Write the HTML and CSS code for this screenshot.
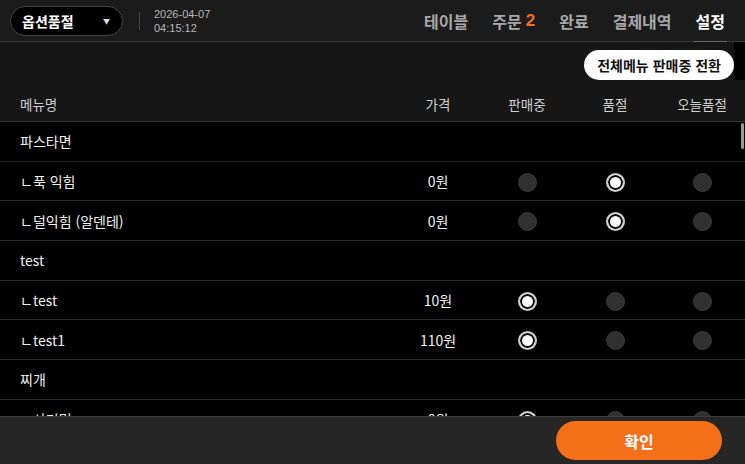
FILE: index.html
```html
<!DOCTYPE html>
<html lang="ko">
<head>
  <meta charset="UTF-8">
  <meta name="viewport" content="width=device-width, initial-scale=1.0">
  <title>옵션품절</title>
  <link rel="stylesheet" href="styles.css">
</head>
<body>
  <div class="app">
    <!-- 상단 바 -->
    <header class="topbar">
      <div class="select-pill">
        <span>옵션품절</span>
        <span class="caret">▼</span>
      </div>
      <div class="divider"></div>
      <div class="clock">
        <div>2026-04-07</div>
        <div>04:15:12</div>
      </div>
      <nav class="nav">
        <a>테이블</a>
        <a>주문 <b class="count">2</b></a>
        <a>완료</a>
        <a>결제내역</a>
        <a class="active">설정</a>
      </nav>
    </header>

    <!-- 툴바 + 표 머리 -->
    <section class="toolbar">
      <div class="toolbar-actions">
        <button class="all-btn">전체메뉴 판매중 전환</button>
        <div class="track-top"></div>
      </div>
      <div class="grid head">
        <div class="cell-name">메뉴명</div>
        <div>가격</div>
        <div>판매중</div>
        <div>품절</div>
        <div>오늘품절</div>
      </div>
    </section>

    <!-- 메뉴 목록 -->
    <section class="list">
      <div class="thumb"></div>
      <div class="row group"><div class="cell-name">파스타면</div></div>
      <div class="row grid">
        <div class="cell-name">ㄴ푹 익힘</div><div>0원</div>
        <div><span class="radio"></span></div><div><span class="radio on"></span></div><div><span class="radio"></span></div>
      </div>
      <div class="row grid">
        <div class="cell-name">ㄴ덜익힘 (알덴테)</div><div>0원</div>
        <div><span class="radio"></span></div><div><span class="radio on"></span></div><div><span class="radio"></span></div>
      </div>
      <div class="row group"><div class="cell-name">test</div></div>
      <div class="row grid">
        <div class="cell-name">ㄴtest</div><div>10원</div>
        <div><span class="radio on"></span></div><div><span class="radio"></span></div><div><span class="radio"></span></div>
      </div>
      <div class="row grid">
        <div class="cell-name">ㄴtest1</div><div>110원</div>
        <div><span class="radio on"></span></div><div><span class="radio"></span></div><div><span class="radio"></span></div>
      </div>
      <div class="row group"><div class="cell-name">찌개</div></div>
      <div class="row grid">
        <div class="cell-name">ㄴ사리면</div><div>0원</div>
        <div><span class="radio on"></span></div><div><span class="radio"></span></div><div><span class="radio"></span></div>
      </div>
    </section>

    <!-- 하단 -->
    <footer class="footer">
      <button class="ok-btn">확인</button>
    </footer>
  </div>
</body>
</html>
```

FILE: styles.css
```css
* {
  margin: 0;
  padding: 0;
  box-sizing: border-box;
}
html, body {
  height: 100%;
  background: #000;
  font-family: "Noto Sans CJK KR", "Noto Sans", sans-serif;
  color: #fff;
  overflow: hidden;
}
.app {
  height: 464px;
  display: flex;
  flex-direction: column;
  background: #000;
}

/* 상단 바 */
.topbar {
  height: 42px;
  flex: none;
  display: flex;
  align-items: center;
  padding: 0 10px;
  background: #1b1b1b;
  border-bottom: 1px solid #3a3a3a;
}
.select-pill {
  width: 113px;
  height: 30px;
  display: flex;
  align-items: center;
  justify-content: space-between;
  padding: 0 12px 0 11px;
  background: #000;
  border: 1px solid #444;
  border-radius: 15px;
  font-size: 14px;
  font-weight: 700;
}
.caret {
  font-size: 7px;
  color: #ddd;
}
.divider {
  width: 1px;
  height: 18px;
  background: #444;
  margin: 0 14px 0 16px;
}
.clock {
  font-family: "Liberation Sans", Arial, sans-serif;
  font-size: 11px;
  line-height: 14px;
  color: #b8b8b8;
}
.nav {
  margin-left: auto;
  display: flex;
  align-items: center;
  gap: 24px;
  height: 100%;
  padding-right: 10px;
}
.nav a {
  position: relative;
  font-size: 16px;
  font-weight: 700;
  color: #a8a8a8;
  height: 100%;
  display: flex;
  align-items: center;
}
.nav .count {
  color: #f37021;
  margin-left: 4px;
  font-family: "Liberation Sans", Arial, sans-serif;
  font-size: 17px;
}
.nav a.active {
  color: #fff;
}
.nav a.active::after {
  content: "";
  position: absolute;
  left: -2px;
  right: -2px;
  bottom: -1px;
  height: 1px;
  background: #666;
}

/* 툴바 */
.toolbar {
  flex: none;
  background: #161616;
  border-bottom: 1px solid #333;
}
.toolbar-actions {
  display: flex;
  justify-content: flex-end;
  align-items: flex-start;
  height: 46px;
  padding-top: 8px;
}
.all-btn {
  height: 30px;
  padding: 0 13px;
  border: none;
  border-radius: 15px;
  background: #fff;
  color: #111;
  font-family: inherit;
  font-size: 14px;
  font-weight: 700;
}
.track-top {
  width: 11px;
  height: 38px;
  margin-top: -8px;
  background: #000;
}

.grid {
  display: grid;
  grid-template-columns: 1fr 90px 88px 88px 86px;
  align-items: center;
  text-align: center;
}
.grid .cell-name,
.row .cell-name {
  text-align: left;
  padding-left: 20px;
}
.head {
  height: 33px;
  padding-bottom: 1px;
  font-size: 13.5px;
  color: #d0d0d0;
}

/* 목록 */
.list {
  position: relative;
  flex: 1;
  overflow: hidden;
}
.row {
  height: 39.67px;
  border-bottom: 1px solid #2a2a2a;
  font-size: 14px;
  color: #f0f0f0;
  display: flex;
  align-items: center;
}
.row.grid {
  display: grid;
}
.radio {
  display: inline-block;
  width: 19px;
  height: 19px;
  border-radius: 50%;
  background: #303030;
  border: 1px solid #3a3a3a;
  vertical-align: middle;
}
.radio.on {
  background: #fff;
  border: 2px solid #cfcfcf;
  box-shadow: inset 0 0 0 2px #000;
}
.thumb {
  position: absolute;
  right: 1px;
  top: 1px;
  width: 3px;
  height: 26px;
  border-radius: 2px;
  background: #9a9a9a;
}

/* 하단 */
.footer {
  flex: none;
  height: 48px;
  display: flex;
  align-items: center;
  justify-content: flex-end;
  padding-right: 23px;
  background: #262626;
  border-top: 1px solid #3c3c3c;
}
.ok-btn {
  width: 166px;
  height: 39px;
  border: none;
  border-radius: 20px;
  background: #f37019;
  color: #fff;
  font-family: inherit;
  font-size: 16px;
  font-weight: 700;
}
```
